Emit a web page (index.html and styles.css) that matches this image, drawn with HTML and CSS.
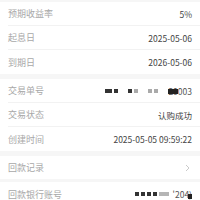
FILE: index.html
```html
<!DOCTYPE html>
<html lang="zh">
<head>
<meta charset="utf-8">
<link rel="stylesheet" href="styles.css">
</head>
<body>
<div class="page">
  <div class="gap top"></div>
  <div class="group">
    <div class="row"><span class="label">预期收益率</span><span class="value">5%</span></div>
    <div class="row"><span class="label">起息日</span><span class="value">2025-05-06</span></div>
    <div class="row"><span class="label">到期日</span><span class="value">2026-05-06</span></div>
  </div>
  <div class="gap"></div>
  <div class="group">
    <div class="row"><span class="label">交易单号</span><span class="value mask"><i class="b w"></i><i class="b"></i><i class="sp"></i><i class="b"></i><i class="b l"></i><i class="sp"></i><i class="b l"></i><i class="b l"></i><i class="sp2"></i><span class="tail">20003<i class="blob"></i></span></span></div>
    <div class="row"><span class="label">交易状态</span><span class="value">认购成功</span></div>
    <div class="row"><span class="label">创建时间</span><span class="value">2025-05-05 09:59:22</span></div>
  </div>
  <div class="gap"></div>
  <div class="group">
    <div class="row short"><span class="label">回款记录</span><svg class="arrow" width="5" height="8" viewBox="0 0 5 8"><path d="M1 1 L4 4 L1 7" fill="none" stroke="#c4c4c4" stroke-width="0.9"/></svg></div>
  </div>
  <div class="gap thin"></div>
  <div class="group">
    <div class="row"><span class="label">回款银行账号</span><span class="value mask"><i class="b"></i><i class="b"></i><i class="b"></i><i class="b"></i><i class="bar"></i><span class="tail">'204)<i class="blob2"></i></span></span></div>
  </div>
</div>
</body>
</html>
```
FILE: styles.css
```css
html, body {
  margin: 0;
  padding: 0;
  background: #ffffff;
}
body {
  font-family: "Noto Sans CJK SC", "Noto Sans", sans-serif;
  font-size: 9px;
}
.page {
  display: flex;
  flex-direction: column;
  width: 200px;
}
.gap {
  height: 5px;
  background: #f6f6f6;
}
.gap.top {
  height: 2px;
}
.gap.thin {
  height: 3px;
}
.group {
  display: flex;
  flex-direction: column;
  padding-left: 8px;
}
.row {
  box-sizing: border-box;
  height: 24px;
  display: flex;
  align-items: center;
  justify-content: space-between;
  padding-right: 8px;
  border-bottom: 1px solid #f2f2f2;
}
.row.short {
  height: 23px;
}
.row:last-child {
  border-bottom: none;
}
.label {
  color: #a8a8a8;
}
.value {
  color: #444444;
  font-size: 8.5px;
}
.arrow {
  display: block;
  margin-right: 2px;
}
.mask {
  display: flex;
  align-items: center;
  gap: 2px;
}
.mask i {
  display: block;
}
.b {
  width: 4px;
  height: 4px;
  background: #333;
}
.b.w {
  width: 7px;
}
.b.l {
  background: #aaa;
}
.sp { width: 6px; }
.sp2 { width: 4px; }
.bar {
  width: 10px;
  height: 4px;
  background: #b5b5b5;
}
.tail {
  position: relative;
  color: #555;
  margin-left: 2px;
}
.blob {
  position: absolute;
  left: 0;
  top: 4px;
  width: 10px;
  height: 5px;
  background: #222;
}
.blob2 {
  position: absolute;
  right: 0;
  top: 6px;
  width: 4px;
  height: 5px;
  background: #222;
}
```
